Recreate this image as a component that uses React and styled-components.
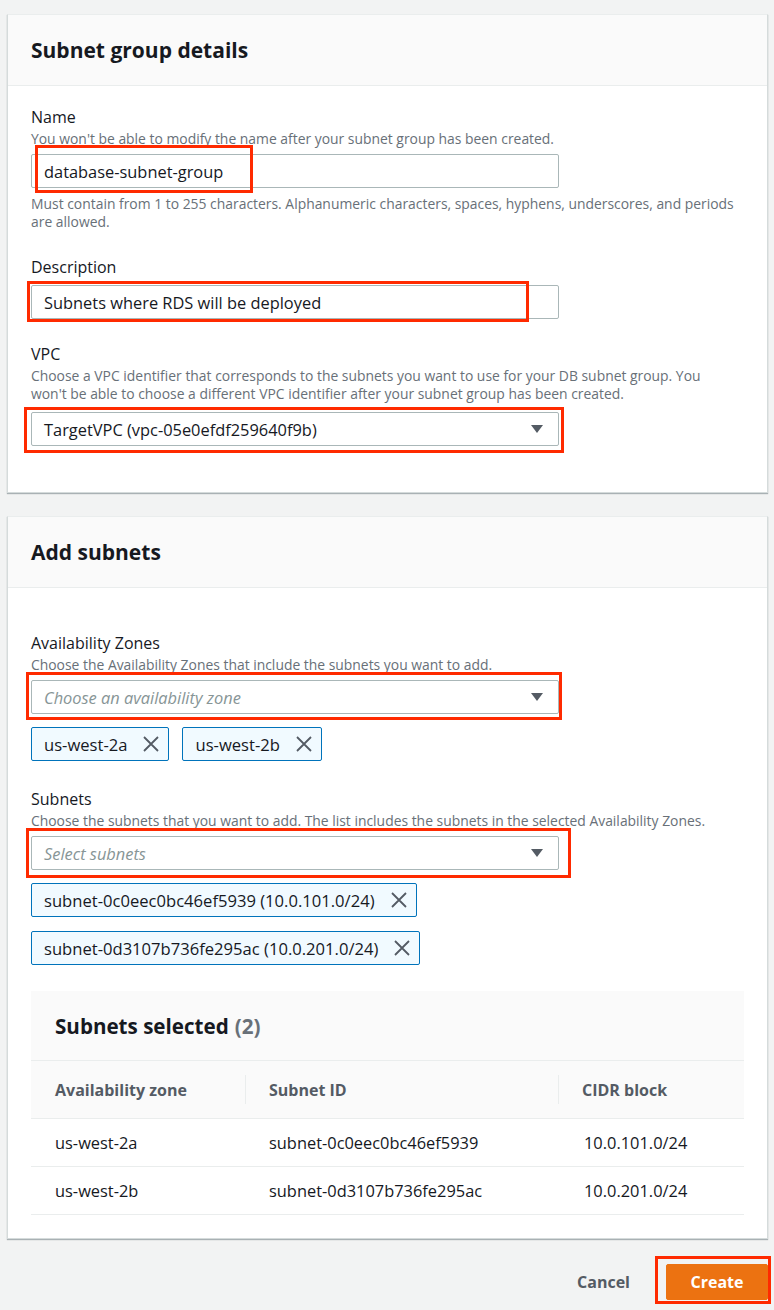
import React from "react"
import styled, { createGlobalStyle } from "styled-components"

const GlobalStyle = createGlobalStyle`
	html, body {
		margin: 0;
		padding: 0;
		background: #f2f3f3;
		font-family: "Open Sans", "Liberation Sans", sans-serif;
		color: #16191f;
	}
	* { box-sizing: border-box; }
`

const Page = styled.div`
	width: 774px;
	padding: 14px 6px 20px 7px;
`

const Card = styled.section`
	background: #ffffff;
	border: 1px solid #d5dbdb;
	border-top-color: #eaeded;
	box-shadow: 0 1px 1px 0 rgba(0, 28, 36, 0.3);
	margin-bottom: ${(p) => p.$gap || 0}px;
`

const CardHeader = styled.header`
	height: 71px;
	display: flex;
	align-items: center;
	padding: 0 23px;
	background: #fafafa;
	border-bottom: 1px solid #eaeded;
`

const CardTitle = styled.h2`
	margin: 0;
	font-size: 21px;
	font-weight: 700;
`

const CardBody = styled.div`
	padding: ${(p) => p.$top}px 23px ${(p) => p.$bottom}px;
	display: flex;
	flex-direction: column;
`

const Field = styled.div`
	display: flex;
	flex-direction: column;
	margin-bottom: ${(p) => p.$gap || 0}px;
`

const Label = styled.label`
	font-size: 16px;
	line-height: 22px;
	color: #16191f;
`

const Hint = styled.div`
	font-size: 13.9px;
	line-height: 18px;
	color: #687078;
	margin-top: ${(p) => p.$above ?? 2}px;
	max-width: ${(p) => (p.$max ? `${p.$max}px` : "none")};
`

const Control = styled.div`
	position: relative;
	width: 528px;
	margin-top: ${(p) => p.$top ?? 6}px;
`

const Input = styled.div`
	height: 34px;
	border: 1px solid #aab7b8;
	border-radius: 2px;
	background: #ffffff;
	display: flex;
	align-items: center;
	justify-content: space-between;
	padding: 0 14px 0 12px;
	font-size: 16.4px;
	color: ${(p) => (p.$placeholder ? "#879596" : "#16191f")};
	font-style: ${(p) => (p.$placeholder ? "italic" : "normal")};
`

/* red annotation boxes drawn over the screenshot */
const Mark = styled.div`
	position: absolute;
	left: ${(p) => p.$l}px;
	top: ${(p) => p.$t}px;
	width: ${(p) => p.$w}px;
	height: ${(p) => p.$h}px;
	border: 3px solid #ff2a00;
	pointer-events: none;
	z-index: 2;
`

const Tokens = styled.div`
	display: flex;
	flex-wrap: ${(p) => (p.$stack ? "nowrap" : "wrap")};
	flex-direction: ${(p) => (p.$stack ? "column" : "row")};
	align-items: flex-start;
	gap: ${(p) => (p.$stack ? 14 : 13)}px;
	margin-top: 13px;
`

const Token = styled.div`
	height: 34px;
	display: inline-flex;
	align-items: center;
	gap: 15px;
	padding: 0 8px 0 12px;
	background: #f1faff;
	border: 1px solid #0073bb;
	border-radius: 2px;
	font-size: 16.6px;
	color: #16191f;
`

const Caret = () => (
	<svg width="14" height="10" viewBox="0 0 14 10">
		<polygon points="1,1 13,1 7,9" fill="#545b64" />
	</svg>
)

const Close = () => (
	<svg width="18" height="18" viewBox="0 0 18 18">
		<path d="M2 2 L16 16 M16 2 L2 16" stroke="#545b64" strokeWidth="1.8" fill="none" />
	</svg>
)

const Selected = styled.div`
	margin-top: 26px;
	background: #ffffff;
`

const SelectedHead = styled.div`
	height: 70px;
	display: flex;
	align-items: center;
	padding: 0 24px;
	background: #fafafa;
	border-bottom: 1px solid #eaeded;
	font-size: 20.6px;
	font-weight: 700;

	& span {
		color: #687078;
		margin-left: 6px;
	}
`

const Grid = styled.div`
	display: grid;
	grid-template-columns: 214px 313px 1fr;
`

const HeadCell = styled.div`
	height: 58px;
	display: flex;
	align-items: center;
	padding-left: 24px;
	background: #fafafa;
	border-bottom: 1px solid #eaeded;
	font-size: 16px;
	font-weight: 700;
	color: #545b64;
	position: relative;

	&::before {
		content: "";
		display: ${(p) => (p.$first ? "none" : "block")};
		position: absolute;
		left: 0;
		top: 14px;
		height: 29px;
		border-left: 1px solid #eaeded;
	}
`

const Cell = styled.div`
	height: 48px;
	display: flex;
	align-items: center;
	padding-left: ${(p) => (p.$last ? 26 : 24)}px;
	border-bottom: 1px solid #eaeded;
	font-size: 16.4px;
	color: #16191f;
`

const Actions = styled.div`
	display: flex;
	justify-content: flex-end;
	align-items: center;
	gap: 36px;
	padding: 25px 0 0;
`

const TextButton = styled.button`
	border: 0;
	background: none;
	font-family: inherit;
	font-size: 16px;
	font-weight: 700;
	color: #545b64;
	padding: 0;
`

const ButtonWrap = styled.div`
	position: relative;
	display: flex;
`

const PrimaryButton = styled.button`
	width: 102px;
	height: 36px;
	border: 1px solid #ec7211;
	border-radius: 2px;
	background: #ec7211;
	color: #ffffff;
	font-family: inherit;
	font-size: 16px;
	font-weight: 700;
`

const rows = [
	["us-west-2a", "subnet-0c0eec0bc46ef5939", "10.0.101.0/24"],
	["us-west-2b", "subnet-0d3107b736fe295ac", "10.0.201.0/24"],
]

export default function App() {
	return (
		<Page>
			<GlobalStyle />
			<Card $gap={23}>
				<CardHeader>
					<CardTitle>Subnet group details</CardTitle>
				</CardHeader>
				<CardBody $top={20} $bottom={46}>
					<Field $gap={25}>
						<Label>Name</Label>
						<Hint>You won't be able to modify the name after your subnet group has been created.</Hint>
						<Control>
							<Input>database-subnet-group</Input>
							<Mark $l={4} $t={-9} $w={218} $h={48} />
						</Control>
						<Hint $above={7}>
							Must contain from 1 to 255 characters. Alphanumeric characters, spaces, hyphens, underscores, and periods are allowed.
						</Hint>
					</Field>
					<Field $gap={24}>
						<Label>Description</Label>
						<Control $top={7}>
							<Input>Subnets where RDS will be deployed</Input>
							<Mark $l={-4} $t={-4} $w={502} $h={41} />
						</Control>
					</Field>
					<Field>
						<Label>VPC</Label>
						<Hint $max={690}>
							Choose a VPC identifier that corresponds to the subnets you want to use for your DB subnet group. You won't be able to choose a different VPC identifier after your subnet group has been created.
						</Hint>
						<Control $top={9}>
							<Input>
								TargetVPC (vpc-05e0efdf259640f9b)
								<Caret />
							</Input>
							<Mark $l={-7} $t={-5} $w={540} $h={46} />
						</Control>
					</Field>
				</CardBody>
			</Card>

			<Card>
				<CardHeader>
					<CardTitle>Add subnets</CardTitle>
				</CardHeader>
				<CardBody $top={44} $bottom={23}>
					<Field $gap={27}>
						<Label>Availability Zones</Label>
						<Hint>Choose the Availability Zones that include the subnets you want to add.</Hint>
						<Control>
							<Input $placeholder>
								Choose an availability zone
								<Caret />
							</Input>
							<Mark $l={-5} $t={-8} $w={536} $h={48} />
						</Control>
						<Tokens>
							<Token>us-west-2a <Close /></Token>
							<Token>us-west-2b <Close /></Token>
						</Tokens>
					</Field>
					<Field>
						<Label>Subnets</Label>
						<Hint>Choose the subnets that you want to add. The list includes the subnets in the selected Availability Zones.</Hint>
						<Control>
							<Input $placeholder>
								Select subnets
								<Caret />
							</Input>
							<Mark $l={-5} $t={-8} $w={545} $h={50} />
						</Control>
						<Tokens $stack>
							<Token>subnet-0c0eec0bc46ef5939 (10.0.101.0/24) <Close /></Token>
							<Token>subnet-0d3107b736fe295ac (10.0.201.0/24) <Close /></Token>
						</Tokens>
					</Field>
					<Selected>
						<SelectedHead>
							Subnets selected<span>(2)</span>
						</SelectedHead>
						<Grid>
							<HeadCell $first>Availability zone</HeadCell>
							<HeadCell>Subnet ID</HeadCell>
							<HeadCell>CIDR block</HeadCell>
							{rows.map((r) => (
								<React.Fragment key={r[1]}>
									<Cell>{r[0]}</Cell>
									<Cell>{r[1]}</Cell>
									<Cell $last>{r[2]}</Cell>
								</React.Fragment>
							))}
						</Grid>
					</Selected>
				</CardBody>
			</Card>

			<Actions>
				<TextButton>Cancel</TextButton>
				<ButtonWrap>
					<PrimaryButton>Create</PrimaryButton>
					<Mark $l={-11} $t={-8} $w={116} $h={48} />
				</ButtonWrap>
			</Actions>
		</Page>
	)
}
